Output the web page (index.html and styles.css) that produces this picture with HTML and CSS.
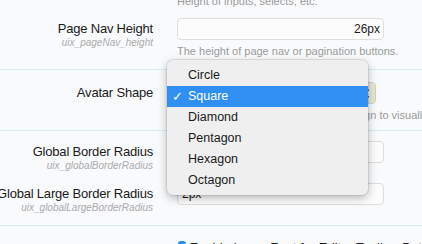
FILE: index.html
```html
<!DOCTYPE html>
<html>
	<head>
		<meta charset="utf-8">
		<title>Style Properties</title>
		<link rel="stylesheet" href="styles.css">
	</head>
	<body>
		<form class="options">
			<section class="group first">
				<div class="row">
					<div class="label"></div>
					<div class="control">
						<p class="hint top">Height of inputs, selects, etc.</p>
					</div>
				</div>
				<div class="row">
					<div class="label">
						<strong>Page Nav Height</strong>
						<em>uix_pageNav_height</em>
					</div>
					<div class="control">
						<input class="input right" type="text" value="26px">
						<p class="hint">The height of page nav or pagination buttons.</p>
					</div>
				</div>
			</section>
			<section class="group avatar">
				<div class="row">
					<div class="label">
						<strong>Avatar Shape</strong>
					</div>
					<div class="control">
						<div class="select">
							<span class="value">Square</span>
							<span class="arrows">&#x25B4;<br>&#x25BE;</span>
							<ul class="menu">
								<li>Circle</li>
								<li class="on">Square</li>
								<li>Diamond</li>
								<li>Pentagon</li>
								<li>Hexagon</li>
								<li>Octagon</li>
							</ul>
						</div>
						<p class="hint">Shape used for all avatars. Pick a design to visually distinguish staff.</p>
					</div>
				</div>
			</section>
			<section class="group radius">
				<div class="row">
					<div class="label">
						<strong>Global Border Radius</strong>
						<em>uix_globalBorderRadius</em>
					</div>
					<div class="control">
						<input class="input" type="text" value="">
					</div>
				</div>
				<div class="row">
					<div class="label">
						<strong>Global Large Border Radius</strong>
						<em>uix_globalLargeBorderRadius</em>
					</div>
					<div class="control">
						<input class="input" type="text" value="2px">
					</div>
				</div>
			</section>
			<section class="group last">
				<div class="row">
					<div class="label"></div>
					<div class="control">
						<label class="check"><span class="box">&#x2713;</span> Enable Large Font for Editor Toolbar Buttons</label>
					</div>
				</div>
			</section>
		</form>
	</body>
</html>
```

FILE: styles.css
```css
body {
	background: #f9fafc;
	color: #1a1a1a;
	font-family: "Liberation Sans", Arial, sans-serif;
	margin: 0;
	overflow: hidden;
}
.options {
	margin-top: -6px;
}
.group {
	border-bottom: 1px solid #d9edf0;
}
.group.first {
	padding-bottom: 11px;
}
.group.avatar {
	padding: 12px 0 8px;
	position: relative;
	z-index: 2;
}
.group.radius {
	padding: 10px 0 11px;
}
.group.last {
	padding-top: 14px;
}
.row {
	column-gap: 24px;
	display: grid;
	grid-template-columns: 153px 207px;
}
.first .row + .row {
	margin-top: 10px;
}
.radius .row + .row {
	margin-top: 11px;
}
.label {
	align-items: flex-end;
	display: flex;
	flex-direction: column;
	padding-top: 3px;
	white-space: nowrap;
}
.label strong {
	font-size: 13px;
	font-weight: normal;
	letter-spacing: -.2px;
	line-height: 16px;
}
.label em {
	color: #aaa;
	font-size: 10px;
	line-height: 12px;
}
.control {
	position: relative;
}
.hint {
	color: #9a9a9a;
	font-size: 11px;
	line-height: 14px;
	margin: 4px 0 0;
	white-space: nowrap;
}
.hint.top {
	margin: 0;
}
.input {
	background: #fcfcfd;
	border: 1px solid #dedede;
	border-radius: 4px;
	box-sizing: border-box;
	color: #1a1a1a;
	display: block;
	font: 12px "Liberation Sans", Arial, sans-serif;
	height: 22px;
	margin: 0;
	padding: 0 4px;
	width: 207px;
}
.input.right {
	padding-right: 3px;
	text-align: right;
}
.select {
	background: #fff;
	border: 1px solid #cfcfcf;
	border-radius: 4px;
	box-sizing: border-box;
	font-size: 12px;
	height: 22px;
	line-height: 20px;
	position: relative;
	width: 199px;
}
.select .value {
	padding-left: 8px;
}
.select .arrows {
	background: #e9e6cd;
	border-left: 1px solid #d6d2b4;
	border-radius: 0 3px 3px 0;
	bottom: 0;
	color: #333;
	font-size: 8px;
	line-height: 9px;
	padding-top: 1px;
	position: absolute;
	right: 0;
	text-align: center;
	top: 0;
	width: 17px;
}
.menu {
	background: #efefef;
	border-radius: 6px;
	box-shadow: 0 3px 10px rgba(0, 0, 0, .28), 0 0 0 1px rgba(0, 0, 0, .08);
	color: #1a1a1a;
	font-size: 12.5px;
	left: -11px;
	list-style: none;
	margin: 0;
	padding: 5px 0 4px;
	position: absolute;
	top: -23px;
	width: 201px;
	z-index: 3;
}
.menu li {
	height: 21px;
	line-height: 21px;
	padding-left: 21px;
	position: relative;
}
.menu li.on {
	background: #2f8ff3;
	color: #fff;
}
.menu li.on:before {
	content: "\2713";
	font-family: "DejaVu Sans", sans-serif;
	font-size: 13px;
	font-weight: bold;
	left: 5px;
	position: absolute;
}
.check {
	align-items: flex-start;
	display: flex;
	font-size: 13px;
	gap: 3px;
	line-height: 15px;
	white-space: nowrap;
}
.check .box {
	background: #2a8bef;
	border-radius: 3px;
	color: #fff;
	font-family: "DejaVu Sans", sans-serif;
	font-size: 10px;
	height: 12px;
	line-height: 12px;
	margin: 1px 0 0 1px;
	text-align: center;
	width: 12px;
}
```
